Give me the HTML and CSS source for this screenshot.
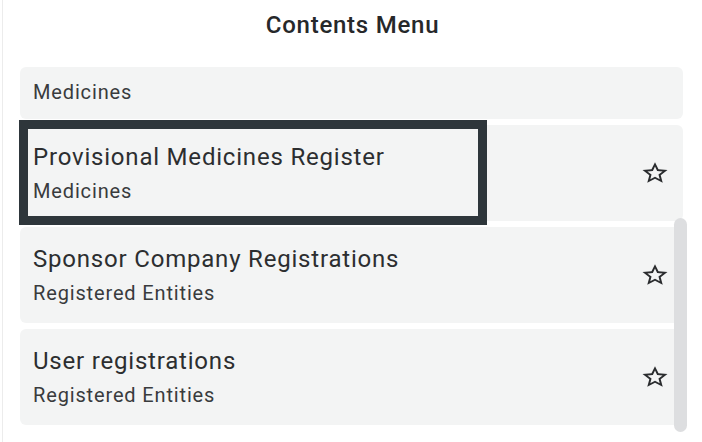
FILE: index.html
```html
<!DOCTYPE html>
<html>
<head>
<meta charset="utf-8">
<link rel="stylesheet" href="styles.css">
</head>
<body>
<div class="panel">
  <h1 class="title">Contents Menu</h1>
  <div class="list">
    <div class="card card-partial">
      <div class="sub">Medicines</div>
    </div>
    <div class="card focused">
      <div class="text">
        <div class="name">Provisional Medicines Register</div>
        <div class="sub">Medicines</div>
      </div>
      <svg class="star" viewBox="0 0 24 24" preserveAspectRatio="none"><path d="M22 9.24l-7.19-.62L12 2 9.19 8.63 2 9.24l5.46 4.73L5.82 21 12 17.27 18.18 21l-1.63-7.03L22 9.24zM12 15.4l-3.76 2.27 1-4.28-3.32-2.88 4.38-.38L12 6.1l1.71 4.04 4.38.38-3.32 2.88 1 4.28L12 15.4z"/></svg>
      <div class="focus-ring"></div>
    </div>
    <div class="card">
      <div class="text">
        <div class="name">Sponsor Company Registrations</div>
        <div class="sub">Registered Entities</div>
      </div>
      <svg class="star" viewBox="0 0 24 24" preserveAspectRatio="none"><path d="M22 9.24l-7.19-.62L12 2 9.19 8.63 2 9.24l5.46 4.73L5.82 21 12 17.27 18.18 21l-1.63-7.03L22 9.24zM12 15.4l-3.76 2.27 1-4.28-3.32-2.88 4.38-.38L12 6.1l1.71 4.04 4.38.38-3.32 2.88 1 4.28L12 15.4z"/></svg>
    </div>
    <div class="card">
      <div class="text">
        <div class="name">User registrations</div>
        <div class="sub">Registered Entities</div>
      </div>
      <svg class="star" viewBox="0 0 24 24" preserveAspectRatio="none"><path d="M22 9.24l-7.19-.62L12 2 9.19 8.63 2 9.24l5.46 4.73L5.82 21 12 17.27 18.18 21l-1.63-7.03L22 9.24zM12 15.4l-3.76 2.27 1-4.28-3.32-2.88 4.38-.38L12 6.1l1.71 4.04 4.38.38-3.32 2.88 1 4.28L12 15.4z"/></svg>
    </div>
    <div class="scrollbar"></div>
  </div>
</div>
</body>
</html>
```

FILE: styles.css
```css
html, body {
  margin: 0;
  padding: 0;
  background: #ffffff;
}
body {
  font-family: Roboto, "Noto Sans", sans-serif;
  color: #2f3133;
}
.panel {
  width: 700px;
  height: 442px;
  margin-left: 2px;
  border-left: 1px solid #ececec;
  box-sizing: border-box;
}
.title {
  margin: 0;
  height: 67px;
  padding-top: 11px;
  box-sizing: border-box;
  text-align: center;
  font-size: 24px;
  font-weight: 500;
  letter-spacing: 0.75px;
  line-height: 28px;
  color: #26282a;
}
.list {
  position: relative;
  display: flex;
  flex-direction: column;
  gap: 6px;
  padding-left: 17px;
  padding-right: 19px;
}
.card {
  position: relative;
  display: flex;
  align-items: center;
  height: 96px;
  padding: 0 13px 0 13px;
  box-sizing: border-box;
  background: #f3f4f4;
  border-radius: 6px;
}
.card-partial {
  height: 52px;
  padding-bottom: 2px;
}
.text {
  flex: 1;
  display: flex;
  flex-direction: column;
  gap: 8px;
}
.name {
  font-size: 24px;
  letter-spacing: 0.8px;
  line-height: 28px;
  color: #2c2e30;
}
.sub {
  font-size: 20px;
  letter-spacing: 0.85px;
  line-height: 24px;
  color: #393b3d;
}
.star {
  width: 30px;
  height: 26px;
  fill: #2a2c2e;
}
.focus-ring {
  position: absolute;
  left: -1px;
  top: -5px;
  width: 468px;
  height: 105px;
  border: 9px solid #2e363b;
  box-sizing: border-box;
}
.scrollbar {
  position: absolute;
  left: 671px;
  top: 151px;
  width: 13px;
  height: 214px;
  background: #dddee0;
  border-radius: 7px;
}
```
